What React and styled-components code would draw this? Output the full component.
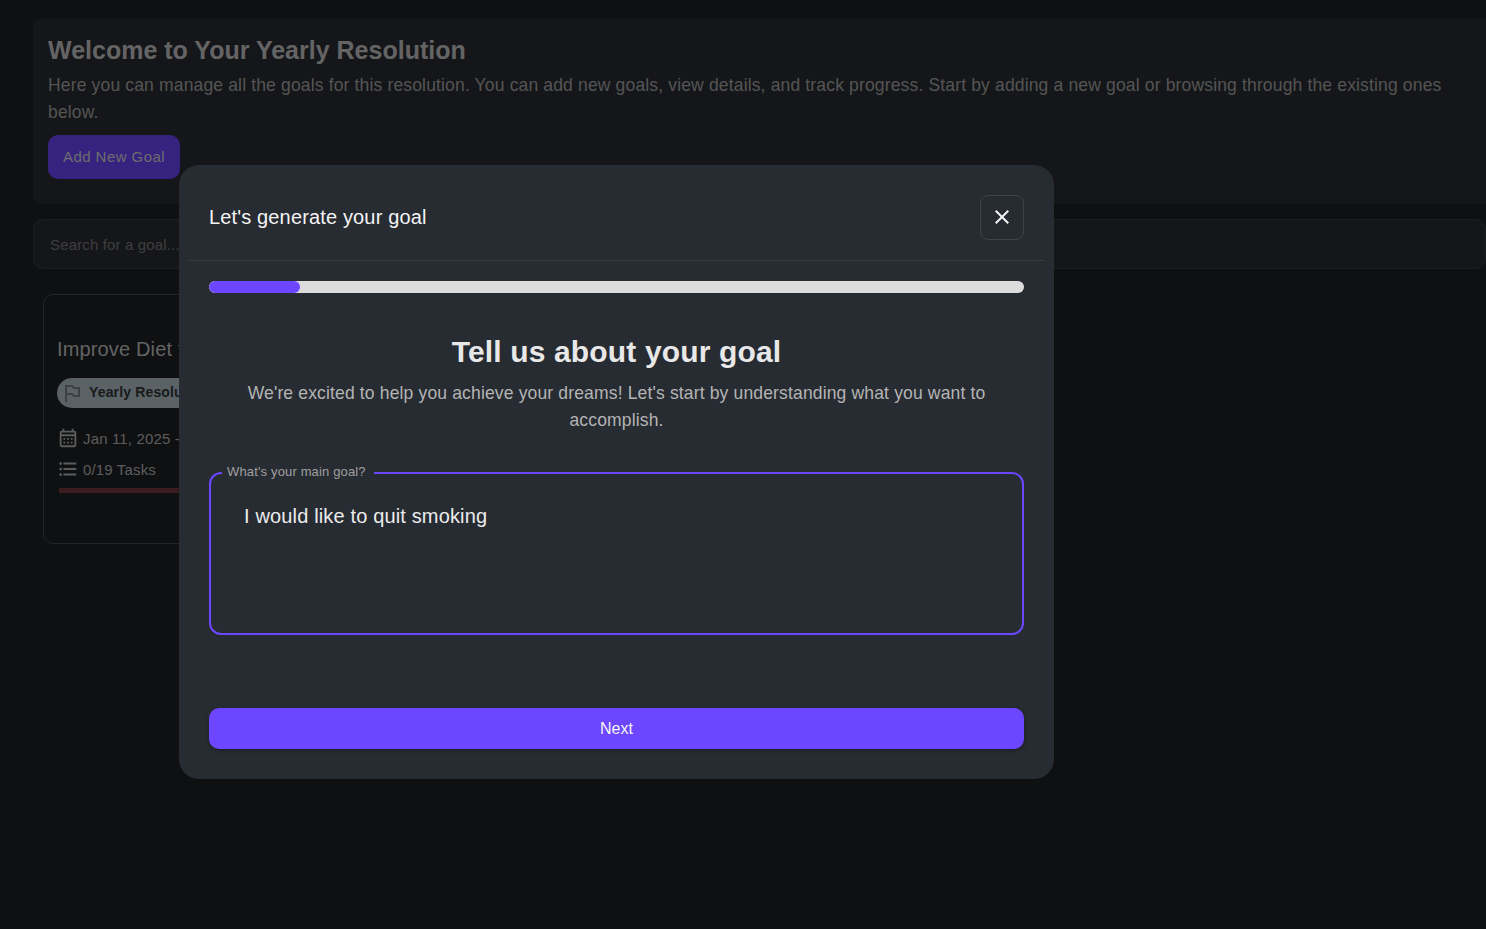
import React from "react";
import styled, { createGlobalStyle } from "styled-components";
import { MdClose, MdFormatListBulleted, MdOutlineCalendarMonth, MdOutlinedFlag } from "react-icons/md";

const GlobalStyle = createGlobalStyle`
  html, body {
    margin: 0;
    padding: 0;
    height: 100%;
    overflow: hidden;
    background: #1e2024;
  }
  * {
    box-sizing: border-box;
  }
  body {
    font-family: "Liberation Sans", Arial, sans-serif;
    letter-spacing: 0.00938em;
  }
`;

const Page = styled.div`
  height: 929px;
  padding: 19px 0 0 33px;
  background: #1e2024;
`;

const Hero = styled.section`
  height: 185px;
  padding: 15px;
  border-radius: 8px 0 0 8px;
  background: #2a2d32;
`;

const HeroTitle = styled.h1`
  margin: 0;
  font-size: 25px;
  line-height: 33px;
  font-weight: 700;
  color: #c9c9c9;
  letter-spacing: 0;
`;

const HeroText = styled.p`
  margin: 5px 0 9px;
  font-size: 17.53px;
  line-height: 27px;
  color: #a8a8a8;
`;

const AddButton = styled.button`
  width: 132px;
  height: 44px;
  padding: 0 0 2px;
  border: 0;
  border-radius: 10px;
  font: inherit;
  font-size: 15px;
  letter-spacing: 0.03em;
  color: #d8d8d8;
  background: #6c47ff;
`;

const SearchBox = styled.div`
  display: flex;
  align-items: center;
  height: 50px;
  margin-top: 15px;
  padding: 0 16px;
  border: 1px solid #383b3f;
  border-radius: 10px;
  background: #2a2d32;
  font-size: 15px;
  color: #7c7c7c;
`;

const GoalCard = styled.article`
  width: 345px;
  height: 250px;
  margin: 25px 0 0 10px;
  padding: 42px 13px 0;
  border: 1px solid #45484b;
  border-radius: 10px;
  background: #1e2024;
`;

const CardTitle = styled.h2`
  margin: 0;
  font-size: 20px;
  line-height: 24px;
  font-weight: 400;
  color: #c6c6c6;
  white-space: nowrap;
`;

const Chip = styled.div`
  display: flex;
  align-items: center;
  gap: 5px;
  width: fit-content;
  height: 30px;
  margin-top: 17px;
  padding: 0 12px 0 3px;
  border-radius: 15px;
  background: #b4c4cc;
  font-size: 14px;
  font-weight: 700;
  color: #333639;
  white-space: nowrap;
  svg {
    font-size: 24px;
    color: #7d8386;
  }
`;

const ChipLabel = styled.span`
  margin-top: -2px;
`;

const MetaRow = styled.div`
  display: flex;
  align-items: center;
  gap: 4px;
  height: 20px;
  margin-top: ${(p) => p.$top}px;
  font-size: 15px;
  color: #b8b8b8;
  white-space: nowrap;
  svg {
    font-size: 22px;
  }
`;

const TaskTrack = styled.div`
  height: 5px;
  margin: 9px 0 0 2px;
  background: #76383f;
`;

const Backdrop = styled.div`
  position: fixed;
  inset: 0;
  background: rgba(0, 0, 0, 0.5);
`;

const Modal = styled.div`
  position: fixed;
  left: 179px;
  top: 165px;
  width: 875px;
  height: 614px;
  border-radius: 20px;
  background: #272b32;
  color: #f2f2f2;
  display: flex;
  flex-direction: column;
`;

const ModalHeader = styled.header`
  display: flex;
  align-items: center;
  justify-content: space-between;
  height: 96px;
  margin: 0 10px;
  padding: 10px 20px 0;
  border-bottom: 1px solid #3b3e40;
`;

const ModalTitle = styled.h2`
  margin: 0;
  font-size: 20px;
  font-weight: 400;
  color: #f4f4f4;
`;

const CloseButton = styled.button`
  display: flex;
  align-items: center;
  justify-content: center;
  width: 44px;
  height: 45px;
  padding: 0 0 1px;
  border: 1px solid #3f4246;
  border-radius: 8px;
  background: transparent;
  color: #f4f4f4;
  svg {
    font-size: 24px;
  }
`;

const ModalBody = styled.div`
  flex: 1;
  display: flex;
  flex-direction: column;
  padding: 20px 30px 30px;
`;

const Progress = styled.div`
  height: 12px;
  border-radius: 6px;
  overflow: hidden;
  background: #dcdcdc;
`;

const ProgressFill = styled.div`
  height: 100%;
  border-radius: 6px;
  background: #6c47ff;
`;

const StepTitle = styled.h3`
  margin: 41px 0 0;
  font-size: 30px;
  line-height: 36px;
  font-weight: 700;
  text-align: center;
  color: #e8e8e8;
`;

const StepText = styled.p`
  margin: 10px auto 0;
  width: 780px;
  font-size: 17.53px;
  line-height: 27px;
  text-align: center;
  color: #b4b4b4;
`;

const Field = styled.fieldset`
  height: 171px;
  margin: 30px 0 0;
  padding: 0 33px;
  border: 2px solid #6c47ff;
  border-radius: 12px;
  min-width: 0;
`;

const FieldLabel = styled.legend`
  margin-left: -22px;
  padding: 0 8px 2px 5px;
  font-size: 13px;
  line-height: 15px;
  color: #a0a0a0;
`;

const FieldValue = styled.div`
  margin-top: 22px;
  font-size: 20px;
  line-height: 27px;
  color: #ececec;
`;

const NextButton = styled.button`
  width: 100%;
  height: 41px;
  margin-top: auto;
  padding: 0;
  border: 0;
  border-radius: 10px;
  font: inherit;
  font-size: 16px;
  color: #f4f4f4;
  background: #6c47ff;
  box-shadow: 0 2px 4px rgba(0, 0, 0, 0.25);
`;

export default function App() {
  const step = 1;
  const totalSteps = 9;

  return (
    <>
      <GlobalStyle />
      <Page>
        <Hero>
          <HeroTitle>Welcome to Your Yearly Resolution</HeroTitle>
          <HeroText>
            Here you can manage all the goals for this resolution. You can add new goals, view
            details, and track progress. Start by adding a new goal or browsing through the
            existing ones below.
          </HeroText>
          <AddButton>Add New Goal</AddButton>
        </Hero>
        <SearchBox>Search for a goal...</SearchBox>
        <GoalCard>
          <CardTitle>Improve Diet for Health</CardTitle>
          <Chip>
            <MdOutlinedFlag />
            <ChipLabel>Yearly Resolution</ChipLabel>
          </Chip>
          <MetaRow $top={20}>
            <MdOutlineCalendarMonth />
            Jan 11, 2025 - Dec 31, 2025
          </MetaRow>
          <MetaRow $top={11}>
            <MdFormatListBulleted />
            0/19 Tasks
          </MetaRow>
          <TaskTrack />
        </GoalCard>
      </Page>
      <Backdrop />
      <Modal>
        <ModalHeader>
          <ModalTitle>Let's generate your goal</ModalTitle>
          <CloseButton aria-label="Close">
            <MdClose />
          </CloseButton>
        </ModalHeader>
        <ModalBody>
          <Progress>
            <ProgressFill style={{ width: `${(step / totalSteps) * 100}%` }} />
          </Progress>
          <StepTitle>Tell us about your goal</StepTitle>
          <StepText>
            We're excited to help you achieve your dreams! Let's start by understanding what you
            want to accomplish.
          </StepText>
          <Field>
            <FieldLabel>What's your main goal?</FieldLabel>
            <FieldValue>I would like to quit smoking</FieldValue>
          </Field>
          <NextButton>Next</NextButton>
        </ModalBody>
      </Modal>
    </>
  );
}
